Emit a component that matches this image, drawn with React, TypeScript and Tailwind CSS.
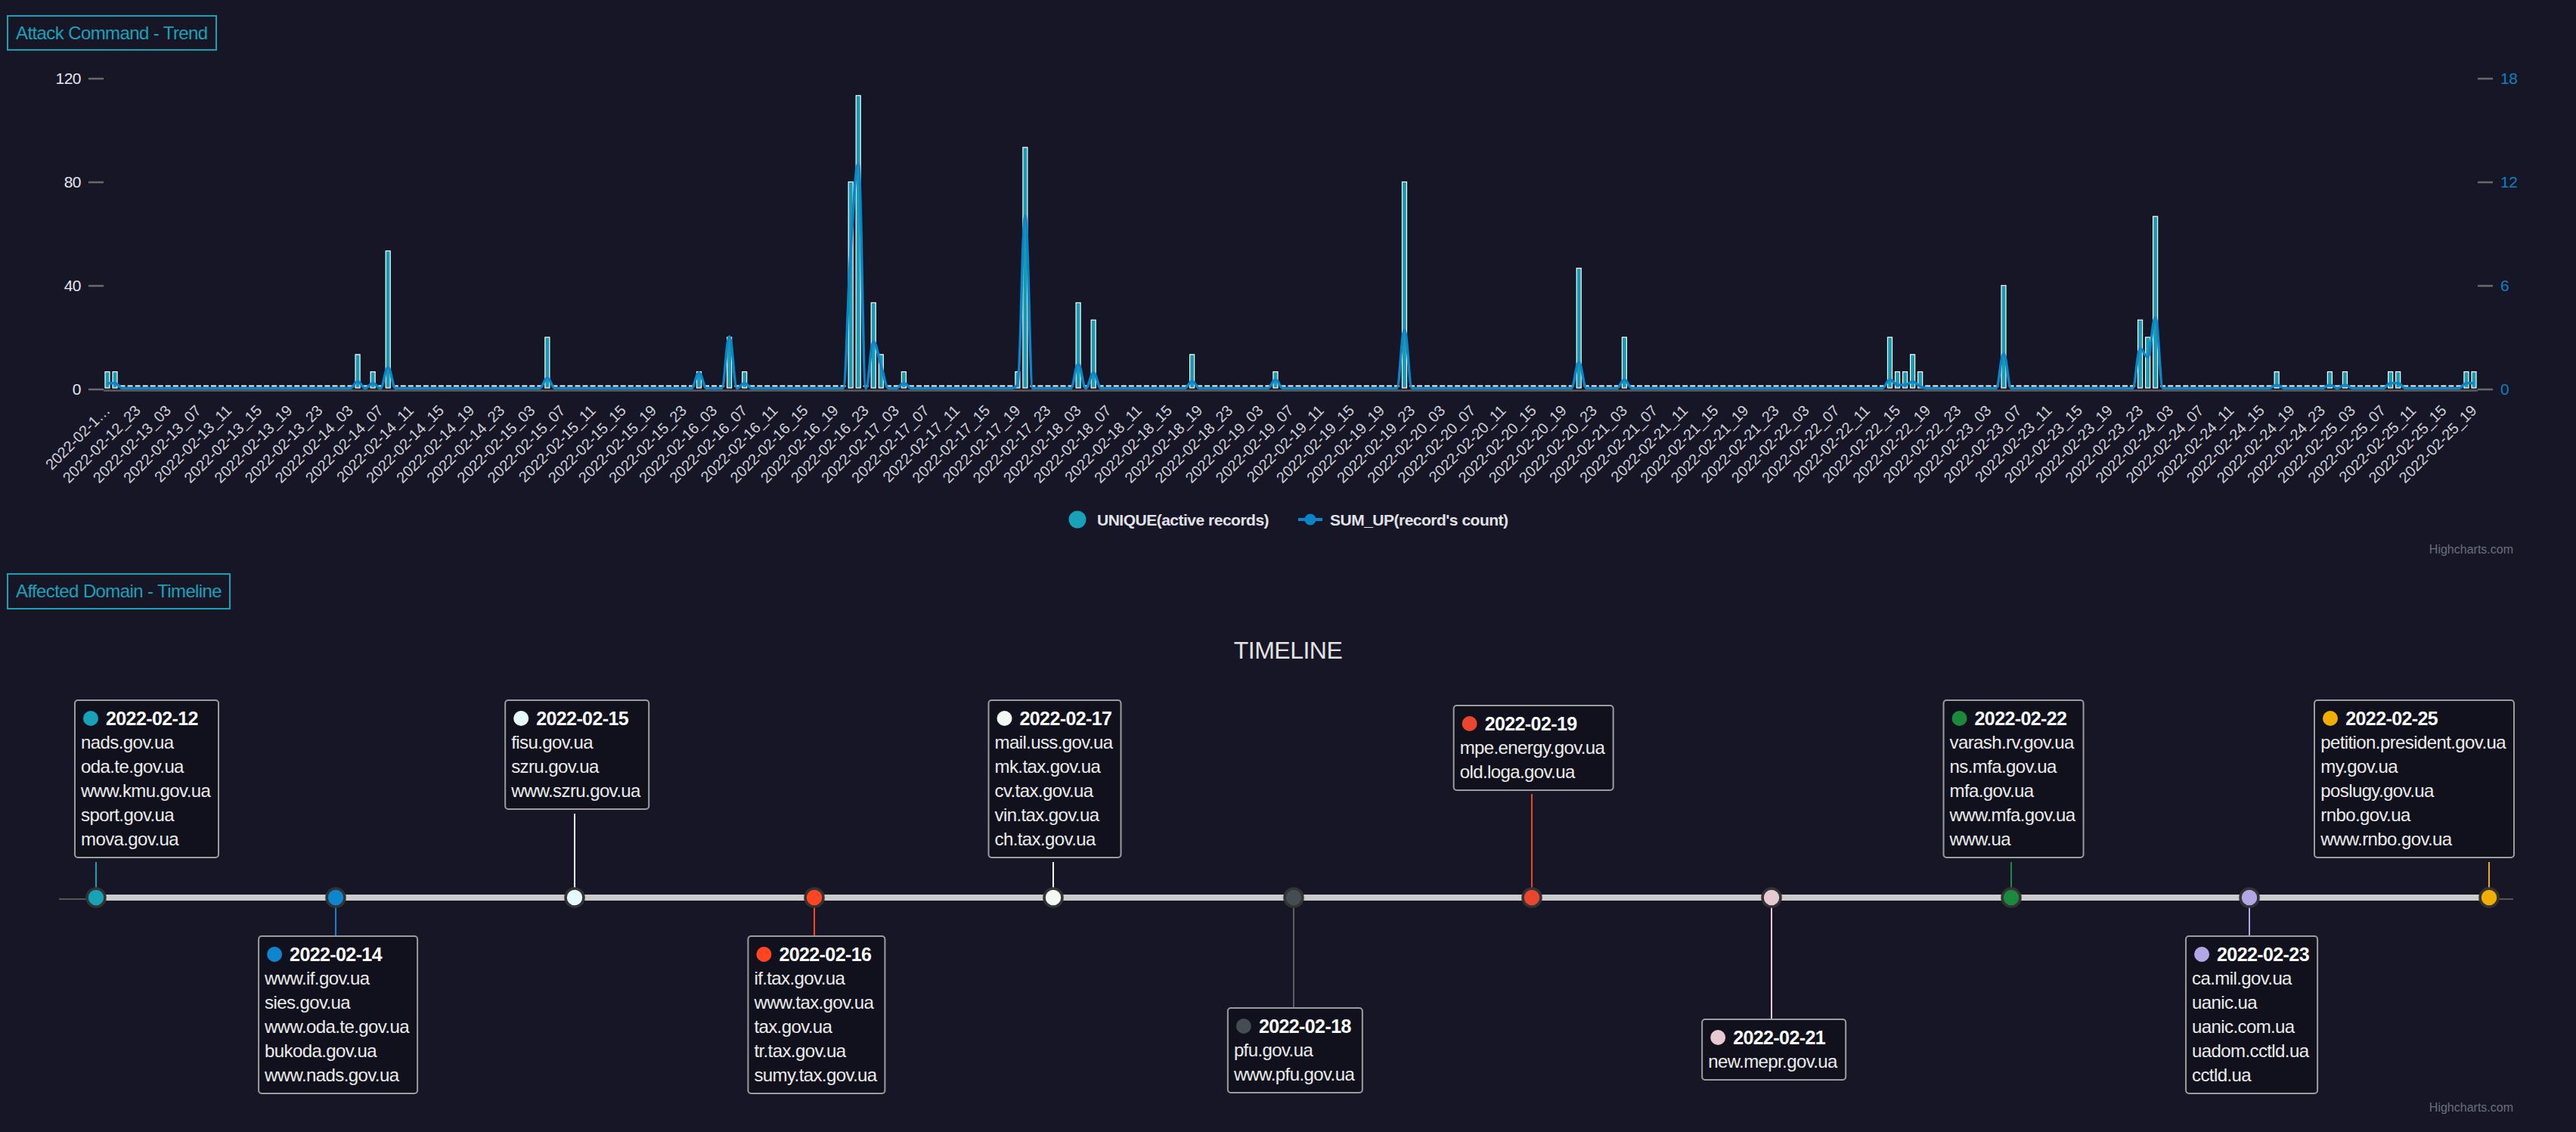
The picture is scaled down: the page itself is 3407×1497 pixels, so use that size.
const N = 313;
const SLOT = 3140 / N;
const cx = (i: number) => 137 + (i + 0.5) * SLOT;
const yv = (v: number) => 514 - v * 22.83;

// UNIQUE(active records), in right-axis units
const bars: Record<number, number> = {
  0: 1, 1: 1, 33: 2, 35: 1, 37: 8, 58: 3, 78: 1, 82: 3, 84: 1, 98: 12, 99: 17, 101: 5, 102: 2,
  105: 1, 120: 1, 121: 14, 128: 5, 130: 4, 143: 2, 154: 1, 171: 12, 194: 7, 200: 3, 235: 3,
  236: 1, 237: 1, 238: 2, 239: 1, 250: 6, 268: 4, 269: 3, 270: 10, 286: 1, 293: 1, 295: 1,
  301: 1, 302: 1, 311: 1, 312: 1,
};

// SUM_UP(record's count)
const sums: Record<number, number> = {
  0: 0.3, 1: 0.3, 33: 0.4, 35: 0.3, 37: 1.2, 58: 0.6, 78: 0.9, 82: 3, 84: 0.3, 98: 8, 99: 13,
  101: 2.7, 102: 1.3, 105: 0.3, 120: 0.2, 121: 10, 128: 1.4, 130: 0.9, 143: 0.4, 154: 0.5,
  171: 3.4, 194: 1.5, 200: 0.5, 235: 0.5, 236: 0.2, 237: 0.2, 238: 0.4, 239: 0.1, 250: 2,
  268: 2.3, 269: 1.8, 270: 4.1, 286: 0.2, 293: 0.2, 295: 0.2, 301: 0.3, 302: 0.3, 311: 0.3, 312: 0.3,
};

function label(i: number) {
  if (i === 0) return "2022-02-1…";
  const h = 19 + i;
  const day = 12 + Math.floor(h / 24);
  const hr = String(h % 24).padStart(2, "0");
  return `2022-02-${day}_${hr}`;
}

// highcharts-like spline
function splinePath(pts: [number, number][]) {
  const s = 1.5;
  const d = s + 1;
  let path = `M${pts[0][0]},${pts[0][1]}`;
  let prevRight: [number, number] = pts[0];
  for (let i = 1; i < pts.length; i++) {
    const [x, y] = pts[i];
    const [lx, ly] = pts[i - 1];
    const next = pts[i + 1];
    let left: [number, number] = [x, y];
    let right: [number, number] = [x, y];
    if (next) {
      const [nx, ny] = next;
      const lcx = (s * x + lx) / d;
      let lcy = (s * y + ly) / d;
      const rcx = (s * x + nx) / d;
      let rcy = (s * y + ny) / d;
      if (rcx !== lcx) {
        const corr = ((rcy - lcy) * (rcx - x)) / (rcx - lcx) + y - rcy;
        lcy += corr;
        rcy += corr;
      }
      if (lcy > ly && lcy > y) {
        lcy = Math.max(ly, y);
        rcy = 2 * y - lcy;
      } else if (lcy < ly && lcy < y) {
        lcy = Math.min(ly, y);
        rcy = 2 * y - lcy;
      }
      if (rcy > ny && rcy > y) {
        rcy = Math.max(ny, y);
        lcy = 2 * y - rcy;
      } else if (rcy < ny && rcy < y) {
        rcy = Math.min(ny, y);
        lcy = 2 * y - rcy;
      }
      left = [lcx, lcy];
      right = [rcx, rcy];
    }
    path += ` C${prevRight[0].toFixed(1)},${prevRight[1].toFixed(1)} ${left[0].toFixed(1)},${left[1].toFixed(1)} ${x.toFixed(1)},${y.toFixed(1)}`;
    prevRight = right;
  }
  return path;
}

function TrendChart() {
  const idx = Array.from({ length: N }, (_, i) => i);
  const linePts: [number, number][] = idx.map((i) => [cx(i), sums[i] ? 513.5 - sums[i] * 22.83 : 513.5]);
  return (
    <svg width="3407" height="681" viewBox="0 67 3407 681">
      {/* left axis */}
      {[
        [0, "0"],
        [6, "40"],
        [12, "80"],
        [18, "120"],
      ].map(([k, t]) => (
        <g key={String(t)}>
          <line x1="117" x2="137" y1={yv(Number(k)) + 1} y2={yv(Number(k)) + 1} stroke="#6a6a6a" strokeWidth="2.5" />
          <text x="107" y={yv(Number(k)) + 8} textAnchor="end" fontSize="21" letterSpacing="-0.5" fill="#e4e8ef">
            {t}
          </text>
        </g>
      ))}
      {/* right axis */}
      {[0, 6, 12, 18].map((k) => (
        <g key={k}>
          <line x1="3277" x2="3297" y1={yv(k) + 1} y2={yv(k) + 1} stroke="#6a6a6a" strokeWidth="2.5" />
          <text x="3307" y={yv(k) + 8} fontSize="21" letterSpacing="-0.5" fill="#0b80c2">
            {k}
          </text>
        </g>
      ))}
      {/* bars */}
      {idx.map((i) => {
        const k = bars[i];
        const x = cx(i) - 3.5;
        if (!k) return <rect key={i} x={x} y="509.5" width="7" height="2" fill="#ffffff" />;
        const top = yv(k);
        return <rect key={i} x={x + 0.5} y={top + 0.5} width="6" height={513 - top - 0.5} fill="#149cb3" stroke="#ffffff" strokeWidth="1.2" />;
      })}
      <path d={splinePath(linePts)} fill="none" stroke="#0a86c8" strokeWidth="3.5" strokeLinejoin="round" />
      <line x1="137" x2="3277" y1="516.5" y2="516.5" stroke="#5d5d5d" strokeWidth="2.5" />
      {/* x labels */}
      {idx
        .filter((i) => i % 4 === 0)
        .map((i) => {
          const ax = cx(i) + 5;
          const ay = 544;
          return (
            <text key={i} x={ax} y={ay} textAnchor="end" fontSize="20" fill="#cfd1d8" transform={`rotate(-45 ${ax} ${ay})`}>
              {label(i)}
            </text>
          );
        })}
      {/* legend */}
      <circle cx="1425" cy="687" r="11.5" fill="#17a2b8" />
      <text x="1451" y="695" fontSize="21" letterSpacing="-0.5" fontWeight="700" fill="#e2e2e6">
        UNIQUE(active records)
      </text>
      <line x1="1717" x2="1749" y1="687" y2="687" stroke="#0a86c8" strokeWidth="4" />
      <circle cx="1733" cy="687" r="7.5" fill="#0a86c8" />
      <text x="1759" y="695" fontSize="21" letterSpacing="-0.5" fontWeight="700" fill="#e2e2e6">
        SUM_UP(record's count)
      </text>
      <text x="3324" y="732" textAnchor="end" fontSize="16" fill="#6b6f7b">
        Highcharts.com
      </text>
    </svg>
  );
}

type Entry = {
  date: string;
  dot: string;
  pos: string;
  domains: string[];
};

const entries: Entry[] = [
  { date: "2022-02-12", dot: "bg-[#17a2b8]", pos: "left-[98px] top-[119px]", domains: ["nads.gov.ua", "oda.te.gov.ua", "www.kmu.gov.ua", "sport.gov.ua", "mova.gov.ua"] },
  { date: "2022-02-14", dot: "bg-[#0b86cf]", pos: "left-[447px] top-[431px] -translate-x-1/2", domains: ["www.if.gov.ua", "sies.gov.ua", "www.oda.te.gov.ua", "bukoda.gov.ua", "www.nads.gov.ua"] },
  { date: "2022-02-15", dot: "bg-[#e6fbff]", pos: "left-[763px] top-[119px] -translate-x-1/2", domains: ["fisu.gov.ua", "szru.gov.ua", "www.szru.gov.ua"] },
  { date: "2022-02-16", dot: "bg-[#ff4522]", pos: "left-[1080px] top-[431px] -translate-x-1/2", domains: ["if.tax.gov.ua", "www.tax.gov.ua", "tax.gov.ua", "tr.tax.gov.ua", "sumy.tax.gov.ua"] },
  { date: "2022-02-17", dot: "bg-[#f2f8f2]", pos: "left-[1395px] top-[119px] -translate-x-1/2", domains: ["mail.uss.gov.ua", "mk.tax.gov.ua", "cv.tax.gov.ua", "vin.tax.gov.ua", "ch.tax.gov.ua"] },
  { date: "2022-02-18", dot: "bg-[#434d52]", pos: "left-[1713px] top-[526px] -translate-x-1/2", domains: ["pfu.gov.ua", "www.pfu.gov.ua"] },
  { date: "2022-02-19", dot: "bg-[#e9452f]", pos: "left-[2028px] top-[126px] -translate-x-1/2", domains: ["mpe.energy.gov.ua", "old.loga.gov.ua"] },
  { date: "2022-02-21", dot: "bg-[#e6c9d3]", pos: "left-[2346px] top-[541px] -translate-x-1/2", domains: ["new.mepr.gov.ua"] },
  { date: "2022-02-22", dot: "bg-[#1b8a3c]", pos: "left-[2663px] top-[119px] -translate-x-1/2", domains: ["varash.rv.gov.ua", "ns.mfa.gov.ua", "mfa.gov.ua", "www.mfa.gov.ua", "www.ua"] },
  { date: "2022-02-23", dot: "bg-[#b3a6e6]", pos: "left-[2978px] top-[431px] -translate-x-1/2", domains: ["ca.mil.gov.ua", "uanic.ua", "uanic.com.ua", "uadom.cctld.ua", "cctld.ua"] },
  { date: "2022-02-25", dot: "bg-[#f2ae00]", pos: "right-[81px] top-[119px]", domains: ["petition.president.gov.ua", "my.gov.ua", "poslugy.gov.ua", "rnbo.gov.ua", "www.rnbo.gov.ua"] },
];

// markers on the line: x, color, connector end y
const markers: [number, string, number][] = [
  [127, "#17a2b8", 334],
  [444, "#0b86cf", 431],
  [760, "#e6fbff", 270],
  [1077, "#ff4522", 431],
  [1393, "#f2f8f2", 334],
  [1711, "#434d52", 526],
  [2026, "#e9452f", 244],
  [2343, "#e6c9d3", 541],
  [2660, "#1b8a3c", 334],
  [2975, "#b3a6e6", 431],
  [3292, "#f2ae00", 334],
];

function DomainBox({ e }: { e: Entry }) {
  return (
    <div className={`absolute ${e.pos} whitespace-nowrap rounded-[5px] border-2 border-[#9c9c9c] bg-[#10111c] py-[7px] pl-[7px] pr-[10px] text-[24px] leading-[32px] tracking-[-0.6px] text-[#ececec]`}>
      <div className="flex items-center gap-[10px]">
        <span className={`ml-[3px] h-[20px] w-[20px] rounded-full ${e.dot}`} />
        <span className="text-[25px] font-bold text-white">{e.date}</span>
      </div>
      {e.domains.map((d) => (
        <div key={d}>{d}</div>
      ))}
    </div>
  );
}

function Timeline() {
  const LY = 381;
  return (
    <div className="relative h-[691px]">
      <div className="pt-[34px] text-center text-[32px] leading-[40px] tracking-[-0.5px] text-[#e2e2e2]">TIMELINE</div>
      <svg className="absolute inset-0" width="3407" height="691" viewBox="0 0 3407 691">
        <line x1="78" x2="127" y1={LY + 2} y2={LY + 2} stroke="#555555" strokeWidth="2" />
        <line x1="3292" x2="3324" y1={LY + 2} y2={LY + 2} stroke="#555555" strokeWidth="2" />
        <line x1="127" x2="3292" y1={LY} y2={LY} stroke="#cccccc" strokeWidth="8" />
        {markers.map(([x, c, end]) => (
          <line key={`c${x}`} x1={x} x2={x} y1={LY} y2={end} stroke={c === "#434d52" ? "#5a5f63" : c} strokeWidth="2" />
        ))}
        {markers.map(([x, c]) => (
          <circle key={x} cx={x} cy={LY} r="12" fill={c} stroke="#333333" strokeWidth="3.5" />
        ))}
        <text x="3324" y="664" textAnchor="end" fontSize="16" fill="#6b6f7b">
          Highcharts.com
        </text>
      </svg>
      {entries.map((e) => (
        <DomainBox key={e.date} e={e} />
      ))}
    </div>
  );
}

export default function App() {
  return (
    <div className="min-h-screen w-full bg-[#161627] font-['Liberation_Sans',Arial,sans-serif]">
      <div className="pl-[9px] pt-[20px]">
        <div className="inline-block border-2 border-[#17a2b8] px-[10px] text-[24px] leading-[43px] tracking-[-0.6px] text-[#17a2b8]">Attack Command - Trend</div>
      </div>
      <TrendChart />
      <div className="pl-[9px] pt-[10px]">
        <div className="inline-block border-2 border-[#17a2b8] px-[10px] text-[24px] leading-[44px] tracking-[-0.6px] text-[#17a2b8]">Affected Domain - Timeline</div>
      </div>
      <Timeline />
    </div>
  );
}
